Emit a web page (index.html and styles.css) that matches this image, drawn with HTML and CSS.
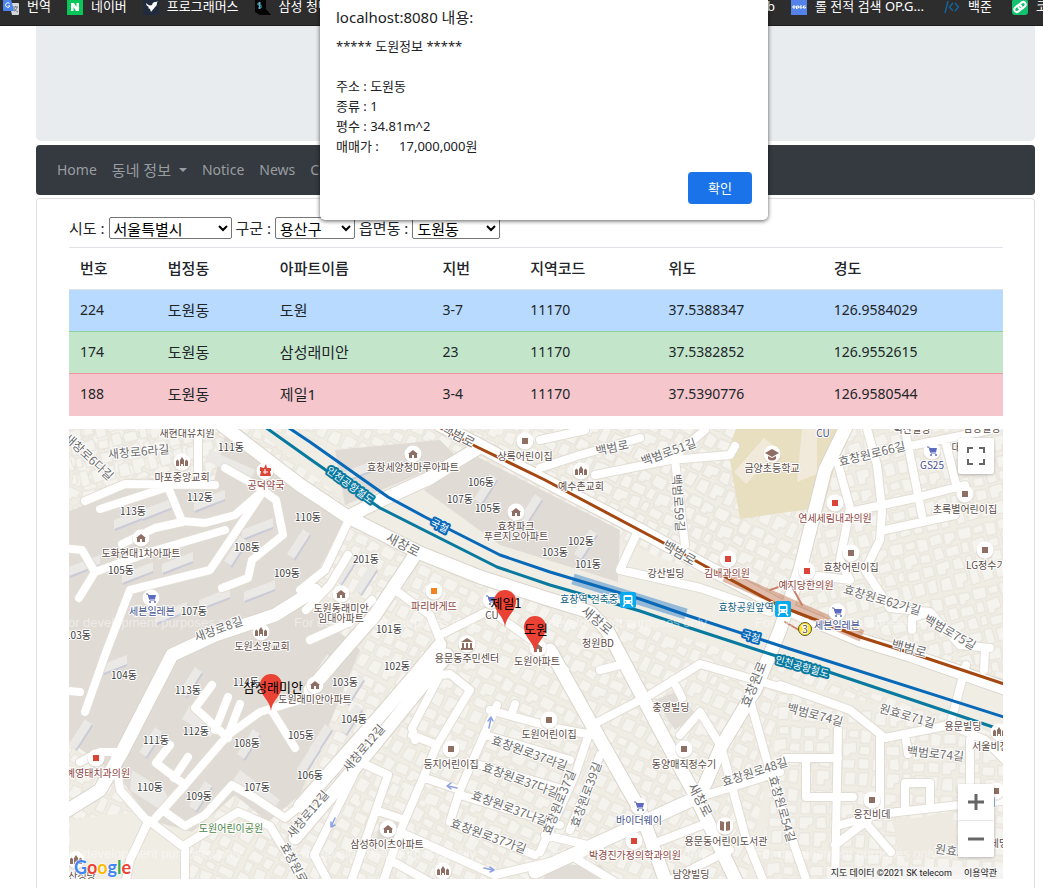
FILE: index.html
```html
<!DOCTYPE html>
<html lang="ko">
<head>
<meta charset="utf-8">
<title>동네 정보</title>
<link rel="stylesheet" href="styles.css">
</head>
<body>
<nav class="bookmarks" aria-label="북마크">
  <div class="bookmarks-main">
    <a class="bookmark" href="#"><svg viewBox="0 0 16 16"><path d="M6 4h9a1 1 0 0 1 1 1v10a1 1 0 0 1-1 1H9z" fill="#d5d7da"/><path d="M1 0h7l3 12H1a1 1 0 0 1-1-1V1a1 1 0 0 1 1-1z" fill="#4c83ee"/><path d="M6.600 4.500A2.300 2.300 0 1 0 7 7H5" fill="none" stroke="#fff"/><path d="M10 8h5M12.500 7v1M14 8c0 2-2 4-3 4m0-3c0 2 2 3 4 4" fill="none" stroke="#71777f"/></svg>번역</a>
    <a class="bookmark" href="#"><svg viewBox="0 0 16 16"><path d="M0 0h16v16H0z" fill="#08c75a"/><path d="M4 4h3l2.500 4V4H12v8H9L6.500 8v4H4z" fill="#fff"/></svg>네이버</a>
    <a class="bookmark" href="#"><svg viewBox="0 0 16 16"><path d="M0 0h16v16H0z" fill="#202b3d"/><path d="M3 4c2 2 4 3 6 2 1-3 2-3 4-3l2-1c-2 2 0 4-3 6-1 2-3 3-4 5l-1-3-2-1 1-1C4 7 3 6 3 4z" fill="#fff"/></svg>프로그래머스</a>
    <a class="bookmark" href="#"><svg viewBox="0 0 16 16"><path d="M0 0h11v10l5 6H5l-5-3z" fill="#050505"/><path d="M6 4H3v2h3v3H3M4.500 3v7" fill="none" stroke="#4cb7c8"/></svg>삼성 청년</a>
    <a class="bookmark bookmark-end" href="#">GitHub</a>
  </div>
  <div class="bookmarks-more">
    <a class="bookmark" href="#"><svg viewBox="0 0 16 16"><path d="M0 0h16v16H0z" fill="#5383e8"/><path d="M2 7h2v2H2zM5.500 10V7h2v2h-2M11 7H9v2h2V8M14.500 7h-2v2h2V8" fill="none" stroke="#fff"/></svg>롤 전적 검색 OP.G...</a>
    <a class="bookmark" href="#"><svg viewBox="0 0 16 16"><path d="M4 2 1 14M9 4 5.500 8 9 12M11 4l3.500 4L11 12" fill="none" stroke="#176298" stroke-width="1.500"/></svg>백준</a>
    <a class="bookmark" href="#"><svg viewBox="0 0 16 16"><rect width="16" height="16" rx="3" fill="#12c26f"/><g fill="none" stroke="#fff" stroke-width="2"><rect x="2" y="7" width="8" height="5" rx="2.500" transform="rotate(-40 6 9.500)"/><rect x="6" y="4" width="8" height="5" rx="2.500" transform="rotate(-40 10 6.500)"/></g></svg>코딩</a>
  </div>
</nav>

<div class="container">
  <header class="hero"></header>
  <nav class="navbar" aria-label="주 메뉴">
    <a href="#">Home</a>
    <a href="#" class="nav-menu">동네 정보</a>
    <a href="#">Notice</a>
    <a href="#">News</a>
    <a href="#">Contact</a>
  </nav>
  <main class="card">
    <form class="filters">
      <label for="sido">시도 :</label>
      <select id="sido" class="wide"><option>서울특별시</option></select>
      <label for="gugun">구군 :</label>
      <select id="gugun"><option>용산구</option></select>
      <label for="dong">읍면동 :</label>
      <select id="dong" class="mid"><option>도원동</option></select>
    </form>
    <table class="apts">
      <colgroup><col class="c-no"><col class="c-dong"><col class="c-name"><col class="c-no"><col class="c-code"><col class="c-lat"><col></colgroup>
      <thead><tr><th>번호</th><th>법정동</th><th>아파트이름</th><th>지번</th><th>지역코드</th><th>위도</th><th>경도</th></tr></thead>
      <tbody>
        <tr class="blue"><td class="num">224</td><td>도원동</td><td>도원</td><td class="num">3-7</td><td class="num">11170</td><td class="num">37.5388347</td><td class="num">126.9584029</td></tr>
        <tr class="green"><td class="num">174</td><td>도원동</td><td>삼성래미안</td><td class="num">23</td><td class="num">11170</td><td class="num">37.5382852</td><td class="num">126.9552615</td></tr>
        <tr class="red"><td class="num">188</td><td>도원동</td><td>제일1</td><td class="num">3-4</td><td class="num">11170</td><td class="num">37.5390776</td><td class="num">126.9580544</td></tr>
      </tbody>
    </table>
    <section class="map" aria-label="지도">
      <svg class="map-canvas" viewBox="69 429 934 450" preserveAspectRatio="xMidYMid slice">
        <defs>
          <pattern id="lots" width="70" height="62" patternUnits="userSpaceOnUse" patternTransform="rotate(27)">
            <g fill="#f5f3ee" stroke="#e6e2da"><path d="M1 2l12-1 1 10-13 1zM16 2l11 1v7l-5 1v3h-7zM30 1h14l-1 12-13-1zM46 3l10-1v8H46zM58 1l11 2-1 12H58zM2 15l9-1 1 12-10 1zM14 17l13-1 1 10H14zM31 15h7v11h-8zM41 16l13-2 1 11-7 1v3h-7zM58 18h10v9l-11-1zM1 30l14-1v8l-5 1v4H1zM18 30l9-2 2 13-11-1zM32 30l6-1v10h-7zM41 32h13l-1 9H41zM57 30l11 1v10H57zM2 46l10-1 1 14-12-1zM16 44h13v9l-5 1v5h-8zM32 43h8l1 15-9 1zM44 45l11-1v13l-11 1zM58 45l10-1-1 14h-9z"/></g>
          </pattern>
          <pattern id="lots-b" href="#lots" patternTransform="rotate(-14)"/>
          <pattern id="lots-c" href="#lots" patternTransform="rotate(3)"/>
          <pattern id="lots-d" href="#lots" patternTransform="rotate(-62)"/>
          <g id="dot"><circle r="9" cy="1" fill="#cfc9c0" opacity=".5"/><circle r="8.500" fill="#fff"/></g>
          <g id="sq"><use href="#dot"/><path d="M-3-3h6v6h-6z" fill="#8f6e63"/></g>
          <g id="med"><use href="#dot"/><path d="M-3-3h6v6h-6z" fill="#db4437"/></g>
          <g id="home"><use href="#dot"/><path d="M-5 0 0-4 5 0H4v4H1V1h-2v3h-3V0z" fill="#8f6e63"/></g>
          <g id="church"><use href="#dot"/><path d="M-6-1l1.500-1.500L-3-1v5h-3zM3-1l1.500-1.500L6-1v5H3zM-2-2l2-3 2 3v6H1V2h-2v2h-1z" fill="#8f6e63"/></g>
          <g id="cart"><use href="#dot"/><path d="M-5-4h2l2 6h5" fill="none" stroke="#5c6bc0"/><path d="M-3-3h8L4 1h-6z" fill="#5c6bc0"/><circle cx="-1" cy="4" r="1" fill="#5c6bc0"/><circle cx="4" cy="4" r="1" fill="#5c6bc0"/></g>
          <g id="train"><rect x="-8" y="-8" width="16" height="16" rx="2" fill="#09a9ee"/><rect x="-4.500" y="-5" width="9" height="9" rx="1.500" fill="#fff"/><path d="M-3-3h6v3h-6z" fill="#09a9ee"/><path d="M-3 4l-2 2.500M3 4l2 2.500" stroke="#fff" stroke-width="1.500"/><circle cx="-2.500" cy="2" r=".8" fill="#09a9ee"/><circle cx="2.500" cy="2" r=".8" fill="#09a9ee"/></g>
          <g id="pin"><path d="M0 0C-1-11-11-15-11-26a11 11 0 0 1 22 0C11-15 1-11 0 0z" fill="#ea4335"/></g>
          <g id="bld"><path d="M-15 4 15-8v9l-30 12z" fill="#c9cbd8"/><path d="M-16 2 15-10v9L-16 11z" fill="#ebe9e5"/></g>
          <g id="bld-n"><path d="M-9 10 7-15l6 6L-3 16z" fill="#c9cbd8"/><path d="M-11 9 5-16l7 5L-4 14z" fill="#ebe9e5"/></g>
          <path id="streets" d="M85 501 125 484 215 485M100 509 168 487 182 521 205 523 235 515 264 490 225 468M262 490 276 500 283 535 252 560 248 578 222 588M122 544 155 528 182 522M95 572 150 552 225 530M264 490 210 570 130 590 105 655 85 712M60 548 82 550 95 572 79 598M198 429V485M115 755 120 790 148 822 130 860 124 890M60 690 80 692M152 822 185 785 228 735 260 712 300 700M228 738 195 708 212 685M215 730 228 697M228 735 240 704M185 785 156 763 170 745M174 778 188 757M80 762 100 752 115 752M272 711 295 748M165 812 185 826 205 815 232 785 255 798 285 818 310 798M148 820 185 848 185 890M185 845 238 812 270 826 300 875M348 522 325 570 300 590M306 610 330 585 348 555M310 640 350 622 372 600M395 590 430 615 440 640M440 635 490 610 545 650 565 670M415 740 412 728 440 675 450 674 470 690 437 745 412 735M437 745 400 832 382 885M360 762 388 775 350 885M360 762 314 855 330 885M378 811 405 820M425 778 460 790 497 705M490 710 555 728 592 735M515 704 512 713M485 735 570 760M480 765 565 790M460 795 560 825M452 822 535 855M460 790 450 822M400 832 495 875 550 862M390 860 435 885M592 725 575 775 540 852M600 755 570 830M592 725 650 695 700 664 790 690M600 670 620 665M673 680 682 698M680 735 700 712 722 748M722 750 745 835 765 885M700 797 780 772M750 700 775 790 808 885M650 845 710 822M650 890 730 850M570 855 620 885M545 835 600 848M540 440 585 430M540 468 580 455 640 438M595 475 670 460 705 430M670 460 730 455 735 446M675 460 685 545M636 535 620 570 700 588 770 612M866 425 877 465 882 510 880 540 865 570 890 608 930 612 960 645 990 648M837 460 850 508 840 560 850 580 810 575M840 460 990 430M905 430 922 515M945 440 957 488M850 512 915 498 965 485M885 530 955 515M930 612 912 618 912 630M780 685 850 710 885 738 950 725 985 740 1010 765M838 730 835 885M806 758V797H853M785 758H838M880 738V812M840 825 880 814 960 805 1010 800M970 740V800M905 810V783H930V805M950 725 966 665M865 822 891 852M835 845 868 820M906 740 908 754M985 650 984 670"/>
          <path id="avenues" d="M222 425 300 485 348 517 420 553 480 577 545 598 590 612 607 630 660 730 695 795 738 885M348 517 375 503 430 478 455 462 480 447M440 425 475 443 540 478 640 530 705 566 780 606 860 640 910 655 1010 690M535 872 700 796 722 745 755 690 780 630 800 570 825 470 847 425M550 650 592 725 640 810 667 885M315 590 275 615 215 635 172 655 122 752 100 790 60 815M300 806 385 710 415 675 440 645M295 838 370 750 447 655M415 555 375 615 340 655 310 690"/>
        </defs>
        <path fill="#f0ede5" d="M60 420h960v470H60z"/>
        <path fill="url(#lots)" d="M60 420h960v470H60z"/>
        <path fill="#f0ede5" d="M250 425 430 470 1010 690V735L790 668 480 580 400 545z"/>
        <path fill="url(#lots)" d="M545 425h200l-10 90 40 90-235-125z"/>
        <path fill="#f0ede5" d="M845 429h160v245L800 605zM785 680 1010 740V885H745z"/>
        <path fill="url(#lots-b)" d="M845 429h160v245L800 605zM60 429h160v60l-80-8-60 20z"/>
        <path fill="url(#lots-c)" d="M780 690 1010 740V885H760z"/>
        <path fill="#f0ede5" d="M300 830 360 760 560 890H70V820l80-10z"/>
        <path fill="url(#lots-d)" d="M330 800 360 760 560 890H180l10-50z"/>
        <path fill="#e8dec0" d="M736 429h108l-20 78-84 12-12-70z"/>
        <path fill="#f1eadb" d="m734 472 30-34 15 12-33 34zM802 429h15v45l-20 8z"/>
        <path fill="#eeeae2" d="M892 822 950 812 960 850 905 862z"/>
        <path fill="#e0dbd5" d="M60 515 150 478 212 490 225 435 345 522 302 600 360 650 300 795 268 822 235 795 192 832 150 820 118 775 60 735zM335 450 440 440 458 458 345 505zM424 490 478 457 620 530 618 582 500 545z"/>
        <path fill="#e1ddd6" d="M655 700 680 690 695 715 675 730zM550 865h50l20 20h-80zM380 822h20v17h-24z"/>
        <g>
          <use href="#bld" x="130" y="518"/><use href="#bld" x="158" y="508"/><use href="#bld" x="210" y="500"/><use href="#bld" x="138" y="572"/><use href="#bld" x="178" y="562"/><use href="#bld" x="258" y="528"/><use href="#bld" x="172" y="612"/><use href="#bld" x="215" y="598"/><use href="#bld" x="260" y="590"/><use href="#bld" x="85" y="565"/><use href="#bld" x="112" y="665"/><use href="#bld" x="360" y="470"/>
          <use href="#bld-n" x="235" y="552"/><use href="#bld-n" x="298" y="545"/><use href="#bld-n" x="190" y="683"/><use href="#bld-n" x="150" y="743"/><use href="#bld-n" x="200" y="797"/><use href="#bld-n" x="248" y="745"/><use href="#bld-n" x="345" y="570"/><use href="#bld-n" x="365" y="580"/><use href="#bld-n" x="322" y="670"/><use href="#bld-n" x="352" y="690"/><use href="#bld-n" x="320" y="740"/><use href="#bld-n" x="350" y="720"/><use href="#bld-n" x="485" y="490"/><use href="#bld-n" x="530" y="510"/><use href="#bld-n" x="585" y="545"/><use href="#bld-n" x="80" y="735"/><use href="#bld-n" x="308" y="760"/>
          <path d="m132 770 32 20 8 14-8 8-34-22zM240 770l40 30-6 8-42-26zM190 705l28 22-8 10-28-18zM210 450l45 20-5 12-45-22z" fill="#ebe9e5"/>
        </g>
        <g fill="none" stroke-linecap="round" stroke-linejoin="round">
          <use href="#streets" stroke="#e2ddd4" stroke-width="10"/><use href="#avenues" stroke="#dad5cb" stroke-width="15"/>
          <use href="#streets" stroke="#fff" stroke-width="8"/><use href="#avenues" stroke="#fff" stroke-width="13"/>
          <path d="M573 579 686 614" stroke="#0a6fc2" stroke-width="11" opacity=".4" stroke-linecap="butt"/>
          <path d="M725 576 862 636" stroke="#b5562b" stroke-width="12" opacity=".4" stroke-linecap="butt"/>
          <path d="M770 590l20-7 12 22M785 622l14 8" stroke="#c98468" stroke-width="2"/>
          <path d="M435 425 475 446 545 480 660 541 705 566 780 606 860 637 920 656 1010 686" stroke="#a44710" stroke-width="3"/>
          <path d="M280 422 310 442 388 497 425 517 500 555 550 572 640 599 686 615 790 649 1010 719" stroke="#0769b8" stroke-width="3"/>
          <path d="M258 422 310 459 380 508 497 567 550 585 640 611 690 628 770 654 826 671 993 727" stroke="#087a9f" stroke-width="3"/>
          <path d="m489 728 2-10m-3 3 3-4 2 4M457 788l-9-2m3-3-4 3 4 3M335 818l-4 9m0-5 0 5 4-2M484 868l9 2m-3-3 4 3-4 2" stroke="#8ca0e5" stroke-width="1.500"/>
        </g>
        <g class="watermark"><text x="60" y="627">For development purposes only</text><text x="294" y="627">For development purposes only</text><text x="525" y="627">For development purposes only</text><text x="755" y="627">For development purposes only</text><text x="60" y="858">For development purposes only</text><text x="294" y="858">For development purposes only</text><text x="525" y="858">For development purposes only</text><text x="755" y="858">For development purposes only</text></g>
        <g>
          <use href="#church" x="182" y="462"/><use href="#home" x="141" y="538"/><use href="#cart" x="151" y="598"/><use href="#church" x="261" y="632"/><use href="#home" x="413" y="454"/><use href="#sq" x="525" y="441"/><use href="#home" x="516" y="512"/><use href="#home" x="341" y="594"/><use href="#church" x="581" y="471"/><use href="#med" x="728" y="559"/><use href="#med" x="835" y="503"/><use href="#med" x="807" y="571"/><use href="#sq" x="851" y="553"/><use href="#cart" x="932" y="451"/><use href="#sq" x="965" y="494"/><use href="#sq" x="985" y="550"/><use href="#cart" x="837" y="612"/><use href="#cart" x="491" y="600"/><use href="#med" x="96" y="758"/><use href="#home" x="315" y="685"/><use href="#sq" x="451" y="749"/><use href="#sq" x="549" y="720"/><use href="#home" x="388" y="829"/><use href="#church" x="443" y="871"/><use href="#sq" x="684" y="749"/><use href="#cart" x="639" y="806"/><use href="#med" x="634" y="841"/><use href="#sq" x="872" y="800"/><use href="#church" x="999" y="732"/><use href="#sq" x="996" y="791"/><use href="#church" x="76" y="860"/><use href="#home" x="538" y="648"/>
          <use href="#dot" x="265" y="471"/><path d="m260 467 4 1 2-4 1 4h4v3h-1l1 5h-11l1-5h-1z" fill="#db4437"/><path d="M265 469v5m-2-2h5" stroke="#fff"/>
          <use href="#dot" x="434" y="591"/><path d="M431 588h6v6h-6z" fill="#f58220"/>
          <use href="#dot" x="467" y="644"/><path d="m461 642 6-4 6 4zM462 643h2v5h-2zM466 643h2v5h-2zM470 643h2v5h-2zM461 648h12v2h-12z" fill="#8f6e63"/>
          <use href="#dot" x="772" y="454"/><path d="m765 453 7-4 7 4-7 4zM768 456v3q4 3 8 0v-3l-4 2z" fill="#8f6e63"/>
          <use href="#dot" x="725" y="826"/><path d="m720 821 4 1v9l-4-1zM730 821l-4 1v9l4-1z" fill="#8f6e63"/>
          <use href="#train" x="628" y="600"/><use href="#train" x="783" y="609"/>
          <circle cx="805" cy="629" r="6.500" fill="#fbe62b" stroke="#5d5526"/>
        </g>
        <g class="labels">
          <text x="187" y="437">새현대유치원</text><text x="182" y="481">마포중앙교회</text><text x="141" y="557">도화현대1차아파트</text><text x="262" y="650">도원소망교회</text><text x="413" y="471">효창세양청마루아파트</text><text x="525" y="460">상록어린이집</text><text x="516" y="530">효창파크</text><text x="516" y="540">푸르지오아파트</text><text x="341" y="612">도원동래미안</text><text x="341" y="622">임대아파트</text><text x="581" y="490">예수촌교회</text><text x="772" y="472">금양초등학교</text><text x="666" y="577">강산빌딩</text><text x="851" y="571">효창어린이집</text><text x="965" y="513">초록별어린이집</text><text x="966" y="569" class="start">LG정수기</text><text x="467" y="662">용문동주민센터</text><text x="537" y="665">도원아파트</text><text x="315" y="703">도원래미안아파트</text><text x="451" y="768">둥지어린이집</text><text x="549" y="738">도원어린이집</text><text x="387" y="848">삼성하이츠아파트</text><text x="671" y="711">충영빌딩</text><text x="684" y="768">동양매직정수기</text><text x="726" y="845">용문동어린이도서관</text><text x="691" y="878">남양빌딩</text><text x="872" y="818">웅진비데</text><text x="963" y="730">용문빌딩</text><text x="972" y="750" class="start">서울비전</text><text x="598" y="647">청원BD</text><text x="82" y="880">산성당</text><text x="912" y="433">덕산빌딩</text><text x="968" y="806" class="start">어린이</text><text x="956" y="451">대</text><text x="982" y="432">남양빌딩</text><text x="492" y="619">CU</text><text x="999" y="847">세명</text>
          <g class="dong"><text x="231" y="451">111동</text><text x="200" y="501">112동</text><text x="133" y="515">113동</text><text x="308" y="521">110동</text><text x="247" y="551">108동</text><text x="121" y="574">105동</text><text x="287" y="577">109동</text><text x="194" y="615">107동</text><text x="78" y="639">103동</text><text x="481" y="486">106동</text><text x="460" y="503">107동</text><text x="488" y="512">105동</text><text x="366" y="563">201동</text><text x="389" y="633">101동</text><text x="581" y="545">102동</text><text x="555" y="556">103동</text><text x="588" y="568">101동</text><text x="124" y="679">104동</text><text x="188" y="694">113동</text><text x="246" y="686">114동</text><text x="196" y="735">112동</text><text x="156" y="744">111동</text><text x="247" y="747">108동</text><text x="301" y="739">105동</text><text x="150" y="791">110동</text><text x="199" y="800">109동</text><text x="257" y="791">107동</text><text x="310" y="779">106동</text><text x="354" y="723">104동</text><text x="345" y="686">103동</text><text x="397" y="670">102동</text></g>
          <g class="clinic"><text x="266" y="489">공덕약국</text><text x="434" y="610">파리바게뜨</text><text x="727" y="577">김내과의원</text><text x="835" y="522">연세세림내과의원</text><text x="806" y="589">예지당한의원</text><text x="98" y="777">혜영태치과의원</text><text x="635" y="859">박경진가정의학과의원</text></g>
          <g class="shop"><text x="152" y="615">세븐일레븐</text><text x="932" y="469">GS25</text><text x="823" y="437">CU</text><text x="837" y="629">세븐일레븐</text><text x="639" y="824">바이더웨이</text></g>
          <g class="station"><text x="589" y="603">효창역 건축중</text><text x="746" y="611">효창공원앞역</text></g>
          <text x="231" y="832" class="park">도원어린이공원</text><text x="805" y="633">3</text>
        </g>
        <g class="roads">
          <text transform="translate(139 456) rotate(-5)">새창로6라길</text><text transform="translate(86 460) rotate(43)">새창로6다길</text><text transform="translate(220 633) rotate(-20)">새창로8길</text><text class="big" transform="translate(401 549) rotate(27)">새창로</text><text class="big" transform="translate(456 440) rotate(27)">백범로</text><text transform="translate(613 452) rotate(-12)">백범로</text><text transform="translate(670 456) rotate(-20)">백범로51길</text><text transform="translate(674 503) rotate(86)">백범로59길</text><text class="big" transform="translate(677 557) rotate(30)">백범로</text><text class="big" transform="translate(594 624) rotate(40)">새창로</text><text transform="translate(873 458) rotate(-14)">효창원로66길</text><text transform="translate(881 604) rotate(16)">효창원로62가길</text><text transform="translate(948 636) rotate(30)">백범로75길</text><text class="big" transform="translate(908 653) rotate(14)">백범로</text><text transform="translate(367 751) rotate(-50)">새창로12길</text><text transform="translate(311 817) rotate(-50)">새창로12길</text><text transform="translate(528 757) rotate(20)">효창원로37라길</text><text transform="translate(519 784) rotate(20)">효창원로37다길</text><text transform="translate(508 812) rotate(20)">효창원로37나길</text><text transform="translate(487 840) rotate(20)">효창원로37가길</text><text transform="translate(563 804) rotate(-68)">효창원로37길</text><text transform="translate(590 796) rotate(-70)">효창원로39길</text><text class="big" transform="translate(696 802) rotate(62)">새창로</text><text class="big" transform="translate(758 686) rotate(-68)">효창원로</text><text transform="translate(756 776) rotate(-18)">효창원로48길</text><text transform="translate(778 810) rotate(74)">효창원로54길</text><text transform="translate(814 719) rotate(15)">백범로74길</text><text transform="translate(906 720) rotate(16)">원효로71길</text><text transform="translate(935 758) rotate(6)">백범로74길</text><text transform="translate(951 855) rotate(8)">원효로</text><text transform="translate(290 865) rotate(62)">효창원로</text>
        </g>
        <g class="rail"><text class="teal" transform="translate(348 488) rotate(36)">인천공항철도</text><text transform="translate(438 529) rotate(27)">국철</text><text transform="translate(750 640) rotate(16)">국철</text><text class="teal" transform="translate(801 670) rotate(16)">인천공항철도</text></g>
        <use href="#pin" x="505" y="627"/><use href="#pin" x="535" y="653"/><use href="#pin" x="271" y="711"/>
        <g class="pins"><text x="506" y="608">제일1</text><text x="536" y="634">도원</text><text x="273" y="692">삼성래미안</text></g>
      </svg>
      <button class="map-btn fullscreen" type="button" aria-label="전체 화면"><svg viewBox="0 0 18 18"><path d="M1 6V1h5M12 1h5v5M17 12v5h-5M6 17H1v-5"/></svg></button>
      <div class="zoom">
        <button class="map-btn" type="button" aria-label="확대"><svg viewBox="0 0 18 18"><path d="M1 9h16M9 1v16"/></svg></button>
        <button class="map-btn" type="button" aria-label="축소"><svg viewBox="0 0 18 18"><path d="M1 9h16"/></svg></button>
      </div>
      <a class="google" href="#"><span class="g-blue">G</span><span class="g-red">o</span><span class="g-yellow">o</span><span class="g-blue">g</span><span class="g-green">l</span><span class="g-red">e</span></a>
      <div class="credit"><span>지도 데이터 ©2021 SK telecom</span><a href="#">이용약관</a></div>
    </section>
  </main>
</div>

<dialog class="alert" open aria-labelledby="alert-title">
  <h1 id="alert-title">localhost:8080 내용:</h1>
  <p>***** 도원정보 *****

주소 : 도원동
종류 : 1
평수 : 34.81m^2
매매가 :      17,000,000원</p>
  <form method="dialog"><button type="submit">확인</button></form>
</dialog>
</body>
</html>
```
FILE: styles.css
```css
* { box-sizing: border-box; }

body {
  margin: 0;
  height: 100vh;
  overflow: hidden;
  display: flex;
  flex-direction: column;
  background: #fff;
  color: #212529;
  font: 15px/24px "Noto Sans", "Noto Sans CJK KR", sans-serif;
}

a { color: inherit; text-decoration: none; }

/* Bookmark strip */
.bookmarks {
  flex: none;
  display: flex;
  height: 26px;
  background: #2d2d2d;
  border-bottom: 1px solid #1b1b1b;
  color: #fff;
  font-size: 13px;
  line-height: 12px;
  white-space: nowrap;
}
.bookmarks-main, .bookmarks-more { display: flex; gap: 16px; }
.bookmarks-main { flex: 1; min-width: 0; padding-left: 3px; }
.bookmarks-more { width: 252px; overflow: hidden; gap: 20px; }
.bookmark { display: flex; gap: 8px; flex: none; }
.bookmark svg { width: 16px; height: 16px; margin-top: -1px; }
.bookmark-end { margin-left: auto; margin-right: 16px; }

/* Page */
.container {
  flex: 1;
  min-height: 0;
  display: flex;
  flex-direction: column;
  margin: 0 8px 0 36px;
}
.hero { flex: none; height: 115px; margin-bottom: 4px; background: #e9ecef; border-radius: 0 0 5px 5px; }
.navbar {
  flex: none;
  display: flex;
  align-items: center;
  gap: 15px;
  height: 50px;
  padding: 0 21px;
  margin-bottom: 3px;
  background: #343a40;
  border-radius: 4px;
  color: #9a9da0;
  font-size: 14px;
}
.nav-menu { display: flex; align-items: center; gap: 8px; font-size: 15px; }
.nav-menu::after { content: ""; border: 4px solid transparent; border-top-color: currentColor; border-bottom: 0; }
.card {
  flex: 1 0 auto;
  padding: 18px 31px 0 32px;
  border: 1px solid #dfdfdf;
  border-bottom: 0;
  border-radius: 4px 4px 0 0;
}

.filters { display: flex; align-items: center; gap: 4px; height: 22px; margin-bottom: 8px; }
.filters select {
  width: 80px;
  height: 22px;
  padding: 0;
  border: 1px solid #767676;
  border-radius: 2px;
  background: #fff;
  color: #000;
  font: 15px/20px "Noto Sans", "Noto Sans CJK KR", sans-serif;
}
.filters select.wide { width: 123px; }
.filters select.mid { width: 88px; }

.apts { width: 100%; table-layout: fixed; border-collapse: collapse; margin-bottom: 13px; }
.apts th, .apts td { height: 42px; padding: 0 11px 1px; text-align: left; line-height: 24px; border-top: 1px solid #dee2e6; }
.apts th { font-weight: 500; }
.apts .num { font-size: 14px; }
.c-no { width: 9.4%; }
.c-dong { width: 12%; }
.c-name { width: 17.4%; }
.c-code { width: 14.8%; }
.c-lat { width: 17.7%; }
.apts .blue { background: #b8daff; }
.apts .green { background: #c3e6cb; }
.apts .red { background: #f5c6cb; }
.apts .green td { border-color: #8fd19e; }
.apts .red td { border-color: #ed969e; }

/* Map */
.map { position: relative; height: 450px; overflow: hidden; background: #f0ede5; }
.map-canvas { display: block; width: 100%; height: 100%; font-family: "Noto Sans CJK KR", sans-serif; }
.map-canvas text { text-anchor: middle; paint-order: stroke; stroke-linejoin: round; }
.map-canvas text.start { text-anchor: start; }
.labels text { font-size: 10px; fill: #5b4b46; stroke: #fff; stroke-width: 2px; }
.labels .dong text { fill: #3c3c3c; }
.labels .clinic text { fill: #8d4441; }
.labels .shop text { fill: #41508d; }
.labels .station text { fill: #12607e; }
.labels text.park { fill: #4b8548; }
.roads text { font-size: 12px; fill: #6d6d6d; stroke: #fff; stroke-width: 2px; }
.roads text.big { font-size: 13px; }
.rail text { font-size: 10px; fill: #fff; stroke: #0769b8; stroke-width: 4px; }
.rail text.teal { stroke: #087a9f; }
.pins text { font-size: 13px; fill: #000; }
.map-canvas .watermark text { font: 13px "Liberation Sans", sans-serif; fill: #fff; opacity: .45; text-anchor: start; }

.map-btn { width: 36px; height: 36px; padding: 9px; border: 0; border-radius: 2px; background: #fff; }
.map-btn svg { display: block; width: 18px; height: 18px; fill: none; stroke: #666; stroke-width: 3px; }
.fullscreen { position: absolute; right: 9px; top: 9px; box-shadow: 0 1px 3px rgba(0, 0, 0, .25); }
.fullscreen svg { stroke-width: 2px; }
.zoom {
  position: absolute;
  right: 9px;
  bottom: 22px;
  display: flex;
  flex-direction: column;
  background: #fff;
  border-radius: 2px;
  box-shadow: 0 1px 3px rgba(0, 0, 0, .25);
}
.zoom .map-btn + .map-btn { border-top: 1px solid #e6e6e6; height: 37px; }
.google {
  position: absolute;
  left: 5px;
  bottom: 0;
  font: 700 18px/24px Lato, sans-serif;
  text-shadow: 0 0 2px #fff, 0 0 2px #fff;
}
.g-blue { color: #4285f4; }
.g-red { color: #ea4335; }
.g-yellow { color: #fbbc05; }
.g-green { color: #34a853; }
.credit {
  position: absolute;
  right: 0;
  bottom: 0;
  display: flex;
  gap: 12px;
  padding: 0 6px 0 4px;
  background: rgba(245, 245, 245, .75);
  color: #222;
  font: 9px/12px Roboto, "Noto Sans CJK KR", sans-serif;
}

/* Alert */
.alert {
  position: absolute;
  top: 0;
  left: 320px;
  width: 448px;
  margin: 0;
  padding: 7px 16px 16px;
  border: 0;
  border-radius: 0 0 5px 5px;
  background: #fff;
  color: #202124;
  box-shadow: 0 1px 4px rgba(0, 0, 0, .65);
}
.alert h1 { margin: 0 0 9px; font-size: 15px; line-height: 20px; font-weight: 400; }
.alert p { margin: 0 0 16px; font-size: 13px; line-height: 20px; white-space: pre-wrap; }
.alert form { display: flex; justify-content: flex-end; }
.alert button {
  width: 64px;
  height: 32px;
  padding: 0;
  border: 0;
  border-radius: 4px;
  background: #1a73e8;
  color: #fff;
  font: 13px/20px "Noto Sans", "Noto Sans CJK KR", sans-serif;
}
```
